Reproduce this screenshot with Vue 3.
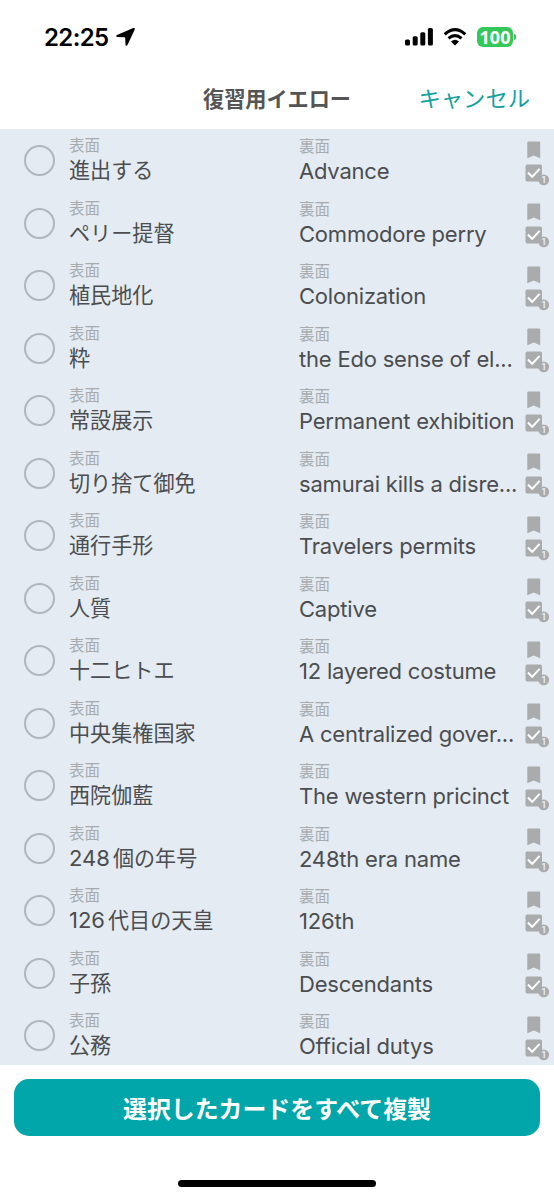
<script setup>
const cards = [
  ['進出する', 'Advance'],
  ['ペリー提督', 'Commodore perry'],
  ['植民地化', 'Colonization'],
  ['粋', 'the Edo sense of el...'],
  ['常設展示', 'Permanent exhibition'],
  ['切り捨て御免', 'samurai kills a disre...'],
  ['通行手形', 'Travelers permits'],
  ['人質', 'Captive'],
  ['十二ヒトエ', '12 layered costume'],
  ['中央集権国家', 'A centralized gover...'],
  ['西院伽藍', 'The western pricinct'],
  ['個の年号', '248th era name', '248'],
  ['代目の天皇', '126th', '126'],
  ['子孫', 'Descendants'],
  ['公務', 'Official dutys'],
].map(([front, back, num]) => ({ front, back, num }))
</script>

<template>
  <div class="screen">
    <div class="status">
      <span class="time">22:25</span>
      <svg class="arrow" width="20" height="20" viewBox="0 0 20 20">
        <path d="M1 8.100 17.200 1.100Q19.400.4 18.700 2.500L11.500 18Q10.400 19.700 9.500 17.900L9.200 10.900Q9.200 10.200 8.500 10.200L1.200 9.900Q-.7 9.200 1 8.100Z" />
      </svg>
      <svg class="signal" width="28" height="18" viewBox="0 0 28 18">
        <rect x="0" y="11.500" width="5" height="6" rx="1.500" />
        <rect x="7.700" y="8.200" width="5" height="9.300" rx="1.500" />
        <rect x="15.300" y="4.200" width="5" height="13.300" rx="1.500" />
        <rect x="22.900" y="0" width="5" height="17.500" rx="1.500" />
      </svg>
      <svg class="wifi" width="24" height="18" viewBox="0 0 24 18">
        <path d="M1.700 6.300Q12-3 22.300 6.300M5.500 10.400Q12 4.800 18.500 10.400" fill="none" stroke="#000" stroke-width="3.100" />
        <path d="M8 13.400Q12 10.200 16 13.400L12.600 16.900Q12 17.400 11.400 16.900Z" />
      </svg>
      <span class="battery">100</span>
      <span class="nub"></span>
    </div>
    <header class="nav">
      <h1>復習用イエロー</h1>
      <span class="cancel">キャンセル</span>
    </header>
    <main class="list">
      <div v-for="card in cards" :key="card.back" class="row">
        <span class="radio"></span>
        <div class="front">
          <div class="label">表面</div>
          <div class="ja"><span v-if="card.num" class="num">{{ card.num }}</span>{{ card.front }}</div>
        </div>
        <div class="back">
          <div class="label">裏面</div>
          <div class="en">{{ card.back }}</div>
        </div>
        <svg class="marks" width="27" height="48" viewBox="0 0 27 48">
          <path d="M3.300 1.500Q3.300.5 4.300.5H15.200Q16.200.5 16.200 1.500V17.200L9.750 14.500 3.300 17.200Z" fill="#a9abad" />
          <rect x="1.500" y="23.500" width="16.500" height="17" rx="1.700" fill="#a9abad" />
          <path d="M3.900 31.500 8.200 35.900 15.600 27.900" fill="none" stroke="#fff" stroke-width="2" />
          <circle cx="19.700" cy="38.900" r="5.400" fill="#a9abad" />
          <text x="19.500" y="42" text-anchor="middle" class="count">1</text>
        </svg>
      </div>
    </main>
    <footer class="bottom">
      <button class="copy">選択したカードをすべて複製</button>
      <div class="home"></div>
    </footer>
  </div>
</template>

<style>
body { background: #fff; }
</style>

<style scoped>
.screen {
  width: 554px;
  height: 1199px;
  overflow: hidden;
  display: flex;
  flex-direction: column;
  background: #fff;
  font-family: Inter, "Noto Sans CJK JP", sans-serif;
}
.status {
  height: 74px;
  flex: none;
  display: flex;
  align-items: center;
  padding: 0 38px 0 44px;
  box-sizing: border-box;
}
.time { font-size: 24px; font-weight: 600; letter-spacing: -.6px; line-height: 30px; padding-top: 1px; }
.arrow { margin-left: 7px; }
.signal { margin-left: auto; }
.wifi { margin-left: 10px; }
.battery {
  width: 36px;
  height: 20px;
  margin-left: 10px;
  border-radius: 6px;
  background: #35c759;
  color: #fff;
  font-family: "Noto Sans", sans-serif;
  font-size: 18px;
  font-weight: 700;
  line-height: 20px;
  text-align: center;
}
.nub { width: 2px; height: 6px; margin-left: 1px; border-radius: 0 2px 2px 0; background: #35c759; }
.nav {
  height: 55px;
  flex: none;
  display: grid;
  grid-template-columns: 1fr auto 1fr;
  align-items: center;
  padding-right: 24px;
  padding-left: 24px;
  padding-bottom: 5px;
  box-sizing: border-box;
}
h1 { grid-column: 2; margin: 0; font-size: 21.200px; line-height: 30px; font-weight: 700; color: #555; }
.cancel { justify-self: end; font-size: 22.300px; line-height: 30px; color: #14a1a2; }
.list { height: 936px; flex: none; overflow: hidden; background: #e4ebf2; }
.row {
  height: 62.500px;
  display: grid;
  grid-template-columns: 69px 230px 225px 30px;
}
.radio {
  width: 31px;
  height: 31px;
  margin: 16.400px 0 0 24px;
  box-sizing: border-box;
  border: 2px solid #afb6bd;
  border-radius: 50%;
}
.front { padding-top: 8px; }
.back { padding-top: 9px; }
.label { font-size: 15.500px; line-height: 18px; color: #a8abae; }
.ja { margin-top: 1px; font-size: 21.100px; line-height: 30px; color: #4b4d50; white-space: nowrap; }
.num { margin-right: 3px; font-size: 22px; line-height: 1; }
.en { font-size: 22px; line-height: 30px; letter-spacing: -.2px; color: #4b4d50; white-space: nowrap; }
.marks { margin: 11.500px 0 0 0; }
.count { font: 700 8.500px Inter, sans-serif; fill: #e4ebf2; }
.bottom { flex: 1; padding: 14px 14px 0; }
.copy {
  display: block;
  width: 526px;
  height: 57px;
  border: 0;
  border-radius: 15px;
  padding: 0;
  background: #00a6a9;
  color: #fff;
  font-family: "Noto Sans CJK JP", sans-serif;
  font-size: 23.900px;
  font-weight: 700;
}
.home { width: 198px; height: 7px; margin: 44px auto 0; border-radius: 4px; background: #000; }
</style>
